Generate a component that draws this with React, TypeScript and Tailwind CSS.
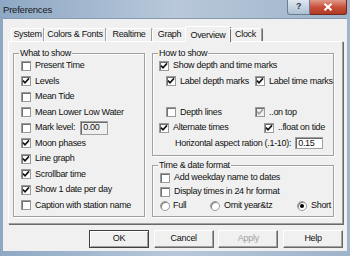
import React from 'react';

const font = { fontFamily: '"Liberation Sans", Arial, sans-serif' };

function Check({ checked, disabled }: { checked?: boolean; disabled?: boolean }) {
  return (
    <span
      className={
        'w-[10px] h-[10px] shrink-0 flex items-center justify-center border border-[#9a9a9a] shadow-[inset_1px_1px_0_#707070] ' +
        (disabled ? 'bg-[#f0f0f0]' : 'bg-white')
      }
    >
      {checked && (
        <svg viewBox="0 0 8 8" className="w-[8px] h-[8px]">
          <path d="M1 3.6 L3 5.8 L7 1.4" stroke={disabled ? '#a0a0a0' : '#111'} strokeWidth="1.6" fill="none" />
        </svg>
      )}
    </span>
  );
}

function Radio({ checked }: { checked?: boolean }) {
  return (
    <span className="w-[10px] h-[10px] shrink-0 rounded-full bg-white border border-[#9a9a9a] shadow-[inset_1px_1px_0_#808080] flex items-center justify-center">
      {checked && <span className="w-[4px] h-[4px] rounded-full bg-black" />}
    </span>
  );
}

function Row({ label, checked, disabled, className = '' }: { label: string; checked?: boolean; disabled?: boolean; className?: string }) {
  return (
    <div className={'flex items-center gap-[4px] ' + className}>
      <Check checked={checked} disabled={disabled} />
      <span>{label}</span>
    </div>
  );
}

function Group({ title, className, children }: { title: string; className: string; children: React.ReactNode }) {
  return (
    <div className={'relative border border-[#a0a0a0] shadow-[inset_1px_1px_0_#fff,1px_1px_0_#fff] ' + className}>
      <span className="absolute -top-[6px] left-[5px] bg-[#f0f0f0] px-[1px] leading-[10px]">{title}</span>
      {children}
    </div>
  );
}

const tabs = [
  { name: 'System', w: 'w-[33px]' },
  { name: 'Colors & Fonts', w: 'w-[62px]' },
  { name: 'Realtime', w: 'w-[46px]' },
  { name: 'Graph', w: 'w-[35px]' },
  { name: 'Overview', w: 'w-[46px]', active: true },
  { name: 'Clock', w: 'w-[33px]' },
];

export default function App() {
  return (
    <div
      className="w-[350px] h-[256px] flex flex-col bg-gradient-to-r from-[#8ea8c4] via-[#b8c8da] to-[#9fb3c9] text-[9px] tracking-[-0.3px] text-[#111] whitespace-nowrap overflow-hidden"
      style={font}
    >
      {/* title bar */}
      <div className="h-[18px] flex items-start shrink-0">
        <span className="ml-[3px] mt-[3px] text-[9.5px] tracking-[-0.2px] text-[#1a1a1a]">Preferences</span>
        <div className="ml-auto mr-[3px] flex">
          <div className="w-[23px] h-[15px] rounded-bl-[3px] border border-[#6a7f96] border-t-0 bg-gradient-to-b from-[#dfe7f0] to-[#aebfd2] flex items-center justify-center text-[9px] font-bold text-[#2a3a4a]">
            ?
          </div>
          <div className="w-[37px] h-[15px] rounded-br-[3px] border border-[#6e2a20] border-t-0 border-l-0 bg-gradient-to-b from-[#e09a8a] via-[#c8503c] to-[#b03a26] flex items-center justify-center">
            <svg viewBox="0 0 10 8" className="w-[10px] h-[8px]">
              <path d="M1.5 0.8 L8.5 7.2 M8.5 0.8 L1.5 7.2" stroke="#fff" strokeWidth="2" />
            </svg>
          </div>
        </div>
      </div>

      {/* client area */}
      <div className="mx-[3px] h-[233px] bg-[#f0f0f0] border-t border-[#8599af] flex flex-col">
        {/* tab strip */}
        <div className="mt-[7px] ml-[8px] h-[15px] flex items-end relative z-10">
          {tabs.map(t =>
            t.active ? (
              <div
                key={t.name}
                className={'h-[16px] -mb-[1px] -mx-[2px] bg-[#f0f0f0] border-t border-l border-white border-r border-r-[#696969] rounded-t-[2px] flex items-start justify-center pt-[2px] ' + t.w}
              >
                {t.name}
              </div>
            ) : (
              <div
                key={t.name}
                className={'h-[13px] border-t border-l border-white border-r border-r-[#a0a0a0] rounded-t-[2px] shadow-[1px_0_0_#696969] flex items-center justify-center ' + t.w}
              >
                {t.name}
              </div>
            )
          )}
        </div>

        {/* tab panel */}
        <div className="ml-[5px] w-[335px] h-[183px] border-t border-l border-white border-r border-b border-r-[#a0a0a0] border-b-[#a0a0a0] shadow-[1px_1px_0_#696969] flex gap-[7px] pl-[4px] pt-[11px]">
          <Group title="What to show" className="w-[132px] h-[164px] pt-[4px] pl-[7px] flex flex-col">
            {[
              ['Present Time', false],
              ['Levels', true],
              ['Mean Tide', false],
              ['Mean Lower Low Water', false],
            ].map(([l, c]) => (
              <Row key={l as string} label={l as string} checked={c as boolean} className="h-[15.5px]" />
            ))}
            <div className="h-[15.5px] flex items-center gap-[4px]">
              <Check />
              <span>Mark level:</span>
              <span className="ml-[1px] w-[28px] h-[14px] bg-[#f0f0f0] border border-[#a0a0a0] shadow-[inset_1px_1px_0_#696969] px-[2px] flex items-center">
                0.00
              </span>
            </div>
            {[
              ['Moon phases', true],
              ['Line graph', true],
              ['Scrollbar time', true],
              ['Show 1 date per day', true],
              ['Caption with station name', false],
            ].map(([l, c]) => (
              <Row key={l as string} label={l as string} checked={c as boolean} className="h-[15.5px]" />
            ))}
          </Group>

          <div className="flex flex-col gap-[9px]">
            <Group title="How to show" className="w-[182px] h-[103px] pt-[4px] pl-[6px] flex flex-col">
              <Row label="Show depth and time marks" checked className="h-[15.5px]" />
              <div className="h-[15.5px] flex items-center pl-[7px]">
                <Row label="Label depth marks" checked className="w-[89px]" />
                <Row label="Label time marks" checked />
              </div>
              <div className="h-[15.5px]" />
              <div className="h-[15.5px] flex items-center pl-[7px]">
                <Row label="Depth lines" className="w-[89px]" />
                <Row label="..on top" checked disabled />
              </div>
              <div className="h-[15.5px] flex items-center">
                <Row label="Alternate times" checked className="w-[105px]" />
                <Row label="..float on tide" checked />
              </div>
              <div className="h-[15.5px] flex items-center pl-[16px]">
                <span>Horizontal aspect ration (.1-10):</span>
                <span className="ml-[4px] w-[28px] h-[12px] bg-white border border-[#a0a0a0] shadow-[inset_1px_1px_0_#696969] px-[2px] flex items-center">
                  0.15
                </span>
              </div>
            </Group>

            <Group title="Time & date format" className="w-[182px] h-[52px] pt-[5px] pl-[7px] flex flex-col">
              <Row label="Add weekday name to dates" className="h-[14px]" />
              <Row label="Display times in 24 hr format" className="h-[14px]" />
              <div className="h-[14px] flex items-center">
                <div className="w-[50px] flex items-center gap-[3px]">
                  <Radio />
                  <span>Full</span>
                </div>
                <div className="w-[87px] flex items-center gap-[4px]">
                  <Radio />
                  <span>Omit year&amp;tz</span>
                </div>
                <div className="flex items-center gap-[4px]">
                  <Radio checked />
                  <span>Short</span>
                </div>
              </div>
            </Group>
          </div>
        </div>

        {/* buttons */}
        <div className="mt-[6px] ml-[86px] flex gap-[4.7px]">
          {['OK', 'Cancel', 'Apply', 'Help'].map(b => (
            <div
              key={b}
              className={
                'w-[60px] h-[18px] flex items-center justify-center bg-[#f0f0f0] border ' +
                (b === 'OK'
                  ? 'border-[#404040] shadow-[inset_1px_1px_0_#fff,inset_-1px_-1px_0_#a0a0a0]'
                  : 'border-t-white border-l-white border-r-[#696969] border-b-[#696969] shadow-[inset_-1px_-1px_0_#a0a0a0]') +
                (b === 'Apply' ? ' text-[#a0a0a0]' : '')
              }
            >
              {b}
            </div>
          ))}
        </div>
      </div>
    </div>
  );
}
